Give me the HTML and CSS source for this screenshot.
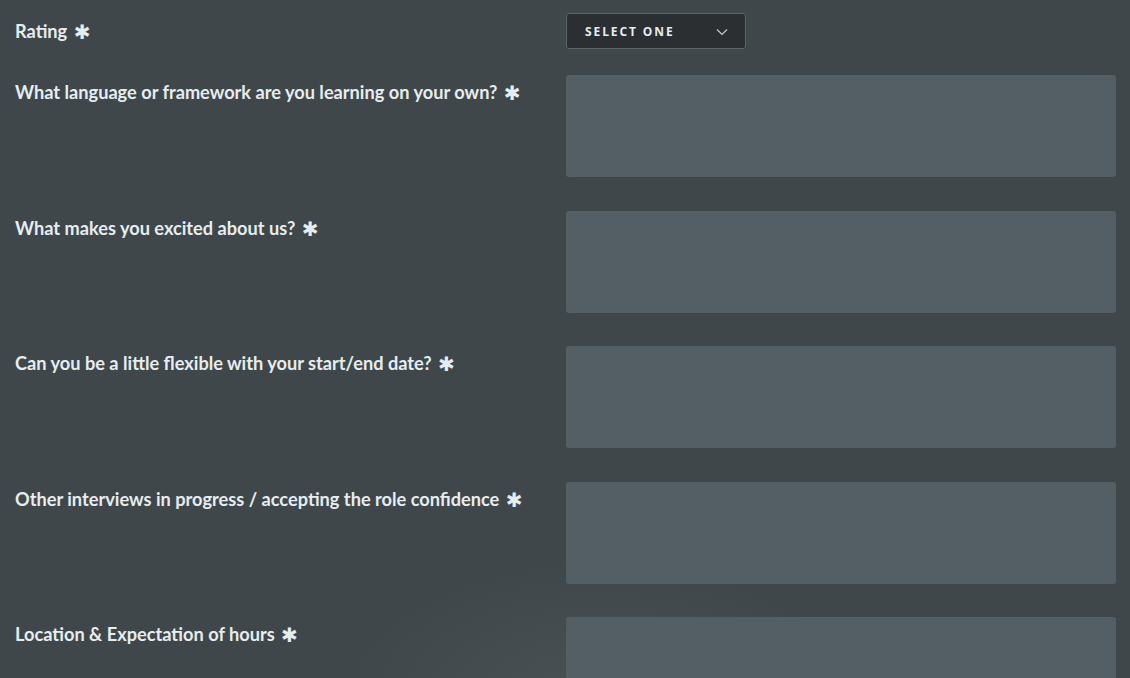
FILE: index.html
```html
<!DOCTYPE html>
<html>
<head>
<meta charset="utf-8">
<link rel="stylesheet" href="styles.css">
</head>
<body>
<form class="form">
  <div class="row row-select">
    <label class="label">Rating <span class="req">✱</span></label>
    <div class="field">
      <button type="button" class="select">
        <span>SELECT ONE</span>
        <svg class="chev" width="12" height="8" viewBox="0 0 12 8"><path d="M1 1.5 L6 6.5 L11 1.5" fill="none" stroke="#c9cfd2" stroke-width="1.1"/></svg>
      </button>
    </div>
  </div>
  <div class="row">
    <label class="label">What language or framework are you learning on your own? <span class="req">✱</span></label>
    <div class="field"><div class="textarea"></div></div>
  </div>
  <div class="row">
    <label class="label">What makes you excited about us? <span class="req">✱</span></label>
    <div class="field"><div class="textarea"></div></div>
  </div>
  <div class="row">
    <label class="label">Can you be a little flexible with your start/end date? <span class="req">✱</span></label>
    <div class="field"><div class="textarea"></div></div>
  </div>
  <div class="row">
    <label class="label">Other interviews in progress / accepting the role confidence <span class="req">✱</span></label>
    <div class="field"><div class="textarea"></div></div>
  </div>
  <div class="row">
    <label class="label">Location &amp; Expectation of hours <span class="req">✱</span></label>
    <div class="field"><div class="textarea"></div></div>
  </div>
</form>
</body>
</html>
```
FILE: styles.css
```css
html, body {
  margin: 0;
  padding: 0;
  height: 100%;
  overflow: hidden;
}
body {
  background-color: #3f474a;
  background-image: radial-gradient(ellipse 260px 140px at 600px 700px, rgba(120,128,130,0.18), rgba(120,128,130,0));
  font-family: "Lato", "Noto Sans", sans-serif;
  color: #e6edf0;
}
.form {
  display: flex;
  flex-direction: column;
  gap: 33.5px;
  padding: 13px 14px 0 15px;
}
.row {
  display: grid;
  grid-template-columns: 551px 550px;
}
.row-select {
  margin-bottom: -7.5px;
}
.label {
  font-size: 18.2px;
  font-weight: 700;
  line-height: 24px;
  padding-top: 5px;
}
.row-select .label {
  padding-top: 6px;
}
.req {
  font-family: "DejaVu Sans", sans-serif;
  font-size: 20px;
  line-height: 16px;
  margin-left: 2px;
  vertical-align: -1px;
}
.select {
  width: 180px;
  height: 36px;
  box-sizing: border-box;
  background: #2b2f32;
  border: 1px solid #5b6468;
  border-radius: 3px;
  display: flex;
  align-items: center;
  justify-content: space-between;
  padding: 1px 17px 0 18px;
  color: #e6ecef;
  font-family: "Open Sans", "Noto Sans", sans-serif;
  font-weight: 700;
  font-size: 12px;
  letter-spacing: 1.9px;
}
.textarea {
  height: 102px;
  background: #535f64;
  border-radius: 3px;
}
```
